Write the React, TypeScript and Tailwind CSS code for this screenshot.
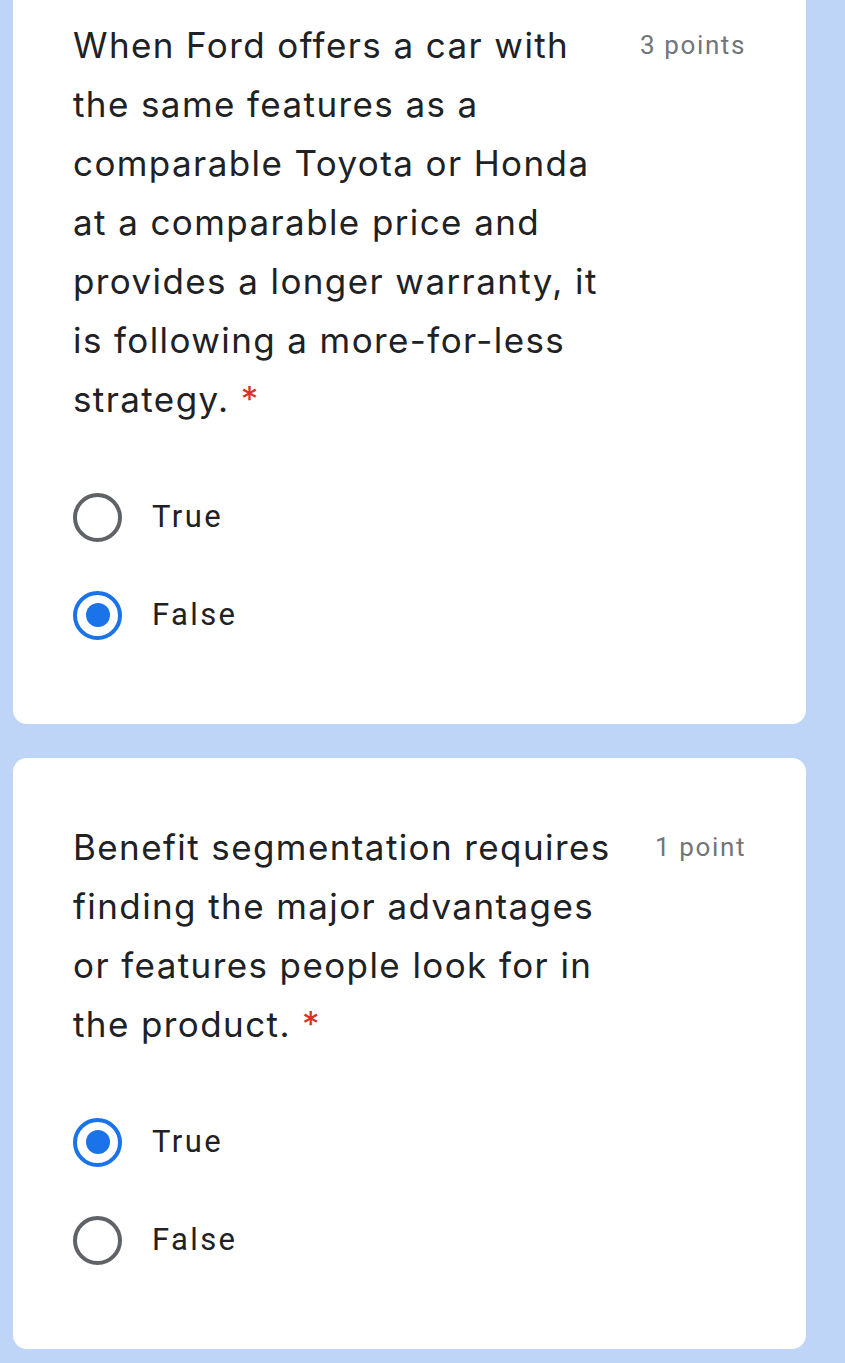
const QUESTIONS = [
  {
    lines: [
      'When Ford offers a car with',
      'the same features as a',
      'comparable Toyota or Honda',
      'at a comparable price and',
      'provides a longer warranty, it',
      'is following a more-for-less',
      'strategy.',
    ],
    points: '3 points',
    options: ['True', 'False'],
    selected: 'False',
  },
  {
    lines: [
      'Benefit segmentation requires',
      'finding the major advantages',
      'or features people look for in',
      'the product.',
    ],
    points: '1 point',
    options: ['True', 'False'],
    selected: 'True',
  },
];

const Radio = ({ checked }: { checked: boolean }) =>
  checked ? (
    <span className="flex h-[49px] w-[49px] shrink-0 items-center justify-center rounded-full border-[4.5px] border-[#1a73e8]">
      <span className="h-[24px] w-[24px] rounded-full bg-[#1a73e8]" />
    </span>
  ) : (
    <span className="h-[49px] w-[49px] shrink-0 rounded-full border-[4.5px] border-[#5f6368]" />
  );

export default function App() {
  return (
    <div className="min-h-[1363px] w-[845px] overflow-hidden bg-[#bed5f8] pl-[13px] font-['Roboto',sans-serif]">
      <div className="-mt-[44px] flex w-[793px] flex-col gap-[34px]">
        {QUESTIONS.map((q, i) => (
          <div key={i} className="rounded-[14px] bg-white px-[60px] pt-[60px] pb-[60px]">
            <div className="flex items-start justify-between">
              <p className="whitespace-nowrap font-['Inter',sans-serif] text-[35px] leading-[59px] tracking-[1.4px] text-[#202124] [font-variant-ligatures:none]">
                {q.lines.map((line, j) => (
                  <span key={j} className="block">
                    {line}
                    {j === q.lines.length - 1 && <span className="text-[#d93025]"> *</span>}
                  </span>
                ))}
              </p>
              <span className="pt-[12px] text-[26px] leading-[34px] tracking-[1.6px] text-[#70757a]">{q.points}</span>
            </div>
            <div className="mt-[39px] flex flex-col">
              {q.options.map((opt) => (
                <div key={opt} className="flex h-[98px] items-center gap-[30px]">
                  <Radio checked={opt === q.selected} />
                  <span className="text-[31px] tracking-[2.4px] text-[#202124]">{opt}</span>
                </div>
              ))}
            </div>
          </div>
        ))}
      </div>
    </div>
  );
}
